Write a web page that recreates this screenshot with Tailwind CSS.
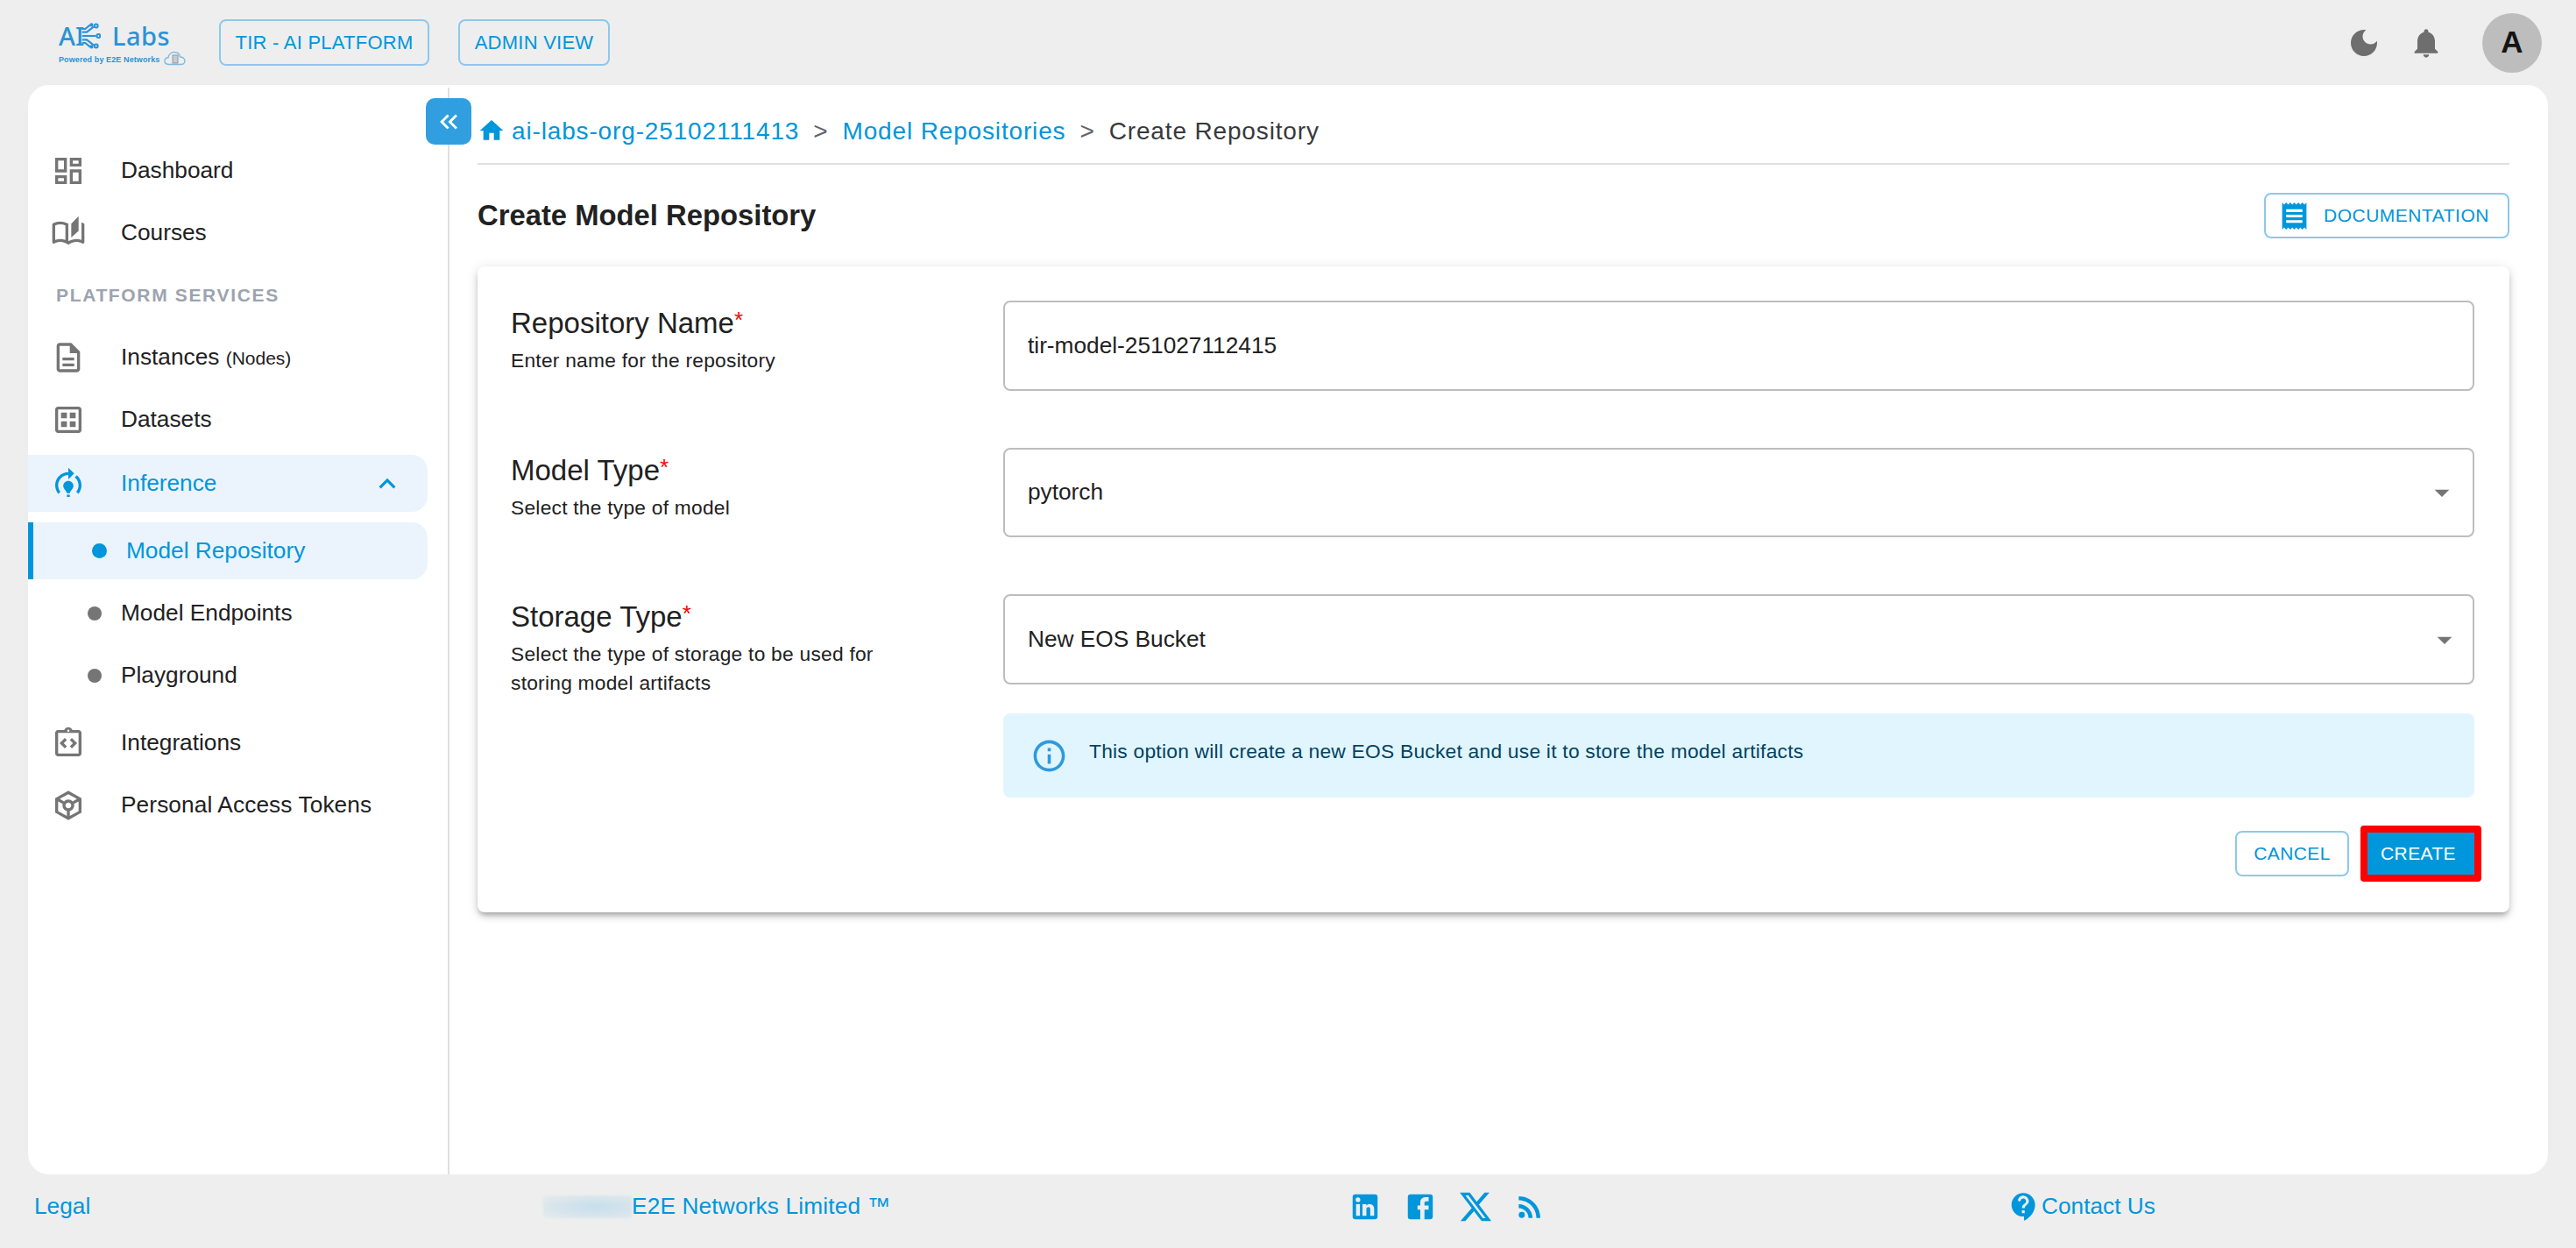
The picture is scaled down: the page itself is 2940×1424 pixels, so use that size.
<!DOCTYPE html>
<html lang="en">
<head>
<meta charset="utf-8">
<title>Create Model Repository</title>
<script src="https://cdn.jsdelivr.net/npm/@tailwindcss/browser@4"></script>
</head>
<body class="m-0">
<div class="w-[2940px] h-[1424px] flex flex-col bg-[#eeeeee] overflow-hidden font-['Liberation_Sans',Arial,sans-serif] text-[26.25px] text-[#212121]">

  <!-- Header -->
  <header class="h-[97px] shrink-0 flex items-center pl-[67px] pr-[39px]">
    <div class="w-[183px] h-[56px] flex flex-col text-[#2a93d5] font-['Noto_Sans',sans-serif]">
      <div class="h-[36px] mt-[2px] flex items-center">
        <span class="text-[29px] leading-[30px] w-[25px] font-medium">AI</span>
        <svg class="w-[23px] h-[30px]" viewBox="0 0 26 32" fill="none" stroke="#2a93d5" stroke-width="2.4">
          <path d="M2 11 L8 11 L17 4"/><path d="M2 7 L6 7 L12 2"/><path d="M2 16 H20"/><path d="M2 21 L8 21 L17 28"/><path d="M2 25 L6 25 L12 30"/>
          <circle cx="20" cy="3" r="2.2"/><circle cx="23" cy="16" r="2.2"/><circle cx="20" cy="29" r="2.2"/><circle cx="14" cy="1.8" r="1.2"/><circle cx="14" cy="30" r="1.2"/>
        </svg>
        <span class="text-[29px] leading-[30px] ml-[13px] tracking-[0.5px] font-medium">Labs</span>
      </div>
      <div class="h-[18px] flex items-center">
        <span class="text-[9px] leading-[12px] font-bold tracking-[0.1px] whitespace-nowrap font-['Liberation_Sans',sans-serif]">Powered by E2E Networks</span>
        <svg class="w-[25px] h-[17px] ml-[5px] -mt-[3px]" viewBox="0 0 25 17" fill="none" stroke="#7fb9e0" stroke-width="1.4">
          <path d="M6 15.5 C2.5 15.5 1 13.5 1 11.5 C1 9 3 7.5 5 7.8 C5.5 4 8.5 1.5 12 1.5 C15.5 1.5 18 4 18.5 7 C21.5 7 24 9 24 11.5 C24 13.8 22 15.5 19.5 15.5 Z"/>
          <rect x="10" y="5" width="6" height="9" fill="#c3cdd4" stroke="#7a8a96" stroke-width="0.8"/>
        </svg>
      </div>
    </div>
    <div class="w-[240px] h-[53px] flex items-center justify-center rounded-[8px] border-2 border-[#8ec8ec] text-[#0096db] text-[22px] tracking-[0.25px] whitespace-nowrap">TIR - AI PLATFORM</div>
    <div class="w-[173px] h-[53px] ml-[33px] flex items-center justify-center rounded-[8px] border-2 border-[#8ec8ec] text-[#0096db] text-[22px] tracking-[0.25px] whitespace-nowrap">ADMIN VIEW</div>
    <div class="ml-auto flex items-center">
      <svg class="w-[40px] h-[40px]" viewBox="0 0 24 24" fill="#6e6e6e"><path d="M12 3c-4.97 0-9 4.03-9 9s4.03 9 9 9 9-4.03 9-9c0-.46-.04-.92-.1-1.36-.98 1.37-2.58 2.26-4.4 2.26-2.98 0-5.4-2.42-5.4-5.4 0-1.81.89-3.42 2.26-4.4-.44-.06-.9-.1-1.36-.1z"/></svg>
      <svg class="w-[40px] h-[40px] ml-[31px]" viewBox="0 0 24 24" fill="#6e6e6e"><path d="M12 22c1.1 0 2-.9 2-2h-4c0 1.1.89 2 2 2zm6-6v-5c0-3.07-1.64-5.64-4.5-6.32V4c0-.83-.67-1.5-1.5-1.5s-1.5.67-1.5 1.5v.68C7.63 5.36 6 7.92 6 11v5l-2 2v1h16v-1l-2-2z"/></svg>
      <div class="w-[68px] h-[68px] ml-[44px] rounded-full bg-[#bdbdbd] flex items-center justify-center text-[#141414] font-bold text-[35px]">A</div>
    </div>
  </header>

  <!-- Main panel -->
  <main class="flex-1 min-h-0 mx-[32px] bg-white rounded-[24px] flex relative">

    <!-- Sidebar -->
    <aside class="w-[481px] shrink-0 mt-[3px] border-r-2 border-[#e0e0e0]">
      <nav class="-mt-[3px] pt-[65px] pr-[23px] flex flex-col">
        <a class="h-[65px] flex items-center pl-[26px]">
          <svg class="w-[40px] h-[40px] mr-[40px]" viewBox="0 0 24 24" fill="#757575"><path d="M19 5v2h-4V5h4M9 5v6H5V5h4m10 8v6h-4v-6h4M9 17v2H5v-2h4M21 3h-8v6h8V3zM11 3H3v10h8V3zm10 8h-8v10h8V11zm-10 4H3v6h8v-6z"/></svg>
          Dashboard
        </a>
        <a class="h-[65px] mt-[6px] flex items-center pl-[26px]">
          <svg class="w-[40px] h-[40px] mr-[40px]" viewBox="0 0 24 24" fill="#757575"><path d="M22.47 5.2C22 4.96 21.51 4.76 21 4.59v12.03C19.86 16.21 18.69 16 17.5 16c-1.9 0-3.78.54-5.5 1.58V5.48C10.38 4.55 8.51 4 6.5 4 4.71 4 3.02 4.44 1.53 5.2c-.33.16-.53.51-.53.88v12.08c0 .58.47.99 1 .99.16 0 .32-.04.48-.12C3.69 18.4 5.05 18 6.5 18c2.07 0 3.98.82 5.5 2 1.52-1.18 3.43-2 5.5-2 1.45 0 2.81.4 4.02 1.04.16.08.32.12.48.12.52 0 1-.41 1-.99V6.08c0-.37-.2-.72-.53-.88zM10 16.62C8.86 16.21 7.69 16 6.5 16c-1.19 0-2.36.21-3.5.62V6.71C4.11 6.24 5.28 6 6.5 6c1.2 0 2.39.25 3.5.72v9.9zM19 .5l-5 5V15l5-4.5V.5z"/></svg>
          Courses
        </a>
        <div class="h-[26px] mt-[26px] pl-[32px] flex items-center text-[21px] font-bold tracking-[1.65px] text-[#9ca3af] whitespace-nowrap">PLATFORM SERVICES</div>
        <a class="h-[65px] mt-[25px] flex items-center pl-[26px]">
          <svg class="w-[40px] h-[40px] mr-[40px]" viewBox="0 0 24 24" fill="#757575"><path d="M8 16h8v2H8zm0-4h8v2H8zm6-10H6c-1.1 0-2 .9-2 2v16c0 1.1.89 2 1.99 2H18c1.1 0 2-.9 2-2V8l-6-6zm4 18H6V4h7v5h5v11z"/></svg>
          <span>Instances <span class="text-[21px]">(Nodes)</span></span>
        </a>
        <a class="h-[65px] mt-[6px] flex items-center pl-[26px]">
          <svg class="w-[40px] h-[40px] mr-[40px]" viewBox="0 0 24 24" fill="#757575"><path d="M19 3H5c-1.1 0-2 .9-2 2v14c0 1.1.9 2 2 2h14c1.1 0 2-.9 2-2V5c0-1.1-.9-2-2-2zm0 16H5V5h14v14zM7 7h4v4H7zm6 0h4v4h-4zm-6 6h4v4H7zm6 0h4v4h-4z"/></svg>
          Datasets
        </a>
        <a class="h-[65px] mt-[8px] flex items-center pl-[26px] bg-[#ebf4fc] rounded-r-[18px] text-[#0096db]">
          <svg class="w-[40px] h-[40px] mr-[40px]" viewBox="0 0 24 24" fill="#0096db"><path d="M15.5 13.5c0 2-2.5 3.5-2.5 5h-2c0-1.5-2.5-3-2.5-5 0-1.93 1.57-3.5 3.5-3.5s3.5 1.57 3.5 3.5zm-2.5 6h-2V21h2v-1.5zm6-6.5c0 1.68-.59 3.21-1.58 4.42l1.42 1.42C20.18 17.27 21 15.23 21 13c0-2.74-1.23-5.19-3.16-6.84l-1.42 1.42C17.99 8.86 19 10.82 19 13zm-3-8-4-4v3c-4.97 0-9 4.03-9 9 0 2.23.82 4.27 2.16 5.84l1.42-1.42C5.59 16.21 5 14.68 5 13c0-3.86 3.14-7 7-7v3l4-4z"/></svg>
          Inference
          <svg class="w-[38px] h-[38px] ml-auto mr-[27px]" viewBox="0 0 24 24" fill="#0096db"><path d="m12 8-6 6 1.41 1.41L12 10.83l4.59 4.58L18 14z"/></svg>
        </a>
        <a class="h-[65px] mt-[12px] flex items-center pl-[67px] border-l-[6px] border-[#0096db] bg-[#ebf4fc] rounded-r-[18px] text-[#0096db]">
          <span class="w-[17px] h-[17px] rounded-full bg-[#0096db] mr-[22px]"></span>
          Model Repository
        </a>
        <a class="h-[65px] mt-[6px] flex items-center pl-[68px]">
          <span class="w-[16px] h-[16px] rounded-full bg-[#757575] mr-[22px]"></span>
          Model Endpoints
        </a>
        <a class="h-[65px] mt-[6px] flex items-center pl-[68px]">
          <span class="w-[16px] h-[16px] rounded-full bg-[#757575] mr-[22px]"></span>
          Playground
        </a>
        <a class="h-[65px] mt-[12px] flex items-center pl-[26px]">
          <svg class="w-[40px] h-[40px] mr-[40px]" viewBox="0 0 24 24" fill="#757575"><path d="M11 14.17 8.83 12 11 9.83 9.59 8.41 6 12l3.59 3.59zm3.41 1.42L18 12l-3.59-3.59L13 9.83 15.17 12 13 14.17z"/><path d="M19 3h-4.18C14.4 1.84 13.3 1 12 1s-2.4.84-2.82 2H5c-.14 0-.27.01-.4.04-.39.08-.74.28-1.01.55-.18.18-.33.4-.43.64-.1.23-.16.49-.16.77v14c0 .27.06.54.16.78s.25.45.43.64c.27.27.62.47 1.01.55.13.02.26.03.4.03h14c1.1 0 2-.9 2-2V5c0-1.1-.9-2-2-2zm-7-.25c.41 0 .75.34.75.75s-.34.75-.75.75-.75-.34-.75-.75.34-.75.75-.75zM19 19H5V5h14v14z"/></svg>
          Integrations
        </a>
        <a class="h-[65px] mt-[6px] flex items-center pl-[26px] tracking-[0.1px]">
          <svg class="w-[40px] h-[40px] mr-[40px]" viewBox="0 0 24 24" fill="#757575"><path d="m21 7-9-5-9 5v10l9 5 9-5V7zm-9-2.71 5.91 3.28-3.01 1.67C14.17 8.48 13.14 8 12 8s-2.17.48-2.9 1.24L6.09 7.57 12 4.29zM11 19.17l-6-3.33V9.26l3.13 1.74c-.09.32-.13.65-.13 1 0 1.86 1.27 3.43 3 3.87v3.3zM10 12c0-1.1.9-2 2-2s2 .9 2 2-.9 2-2 2-2-.9-2-2zm3 7.17v-3.3c1.73-.44 3-2.01 3-3.87 0-.35-.04-.68-.13-1L19 9.26v6.58l-6 3.33z"/></svg>
          Personal Access Tokens
        </a>
      </nav>
    </aside>

    <!-- Collapse toggle over the divider -->
    <button class="absolute left-[455px] top-[15px] w-[52px] h-[53px] -translate-x-[1px] rounded-[10px] bg-[#319fdf] flex items-center justify-center">
      <svg class="w-[34px] h-[34px]" viewBox="0 0 24 24" fill="#ffffff"><path d="M17.59 18 19 16.59 14.42 12 19 7.41 17.59 6l-6 6z"/><path d="M11 18l1.41-1.41L7.83 12l4.58-4.59L11 6l-6 6z"/></svg>
    </button>

    <!-- Content -->
    <section class="flex-1 min-w-0 pl-[32px] pr-[44px] flex flex-col">
      <div class="h-[91px] shrink-0 pt-[16px] flex items-center border-b-2 border-[#e0e0e0] text-[28px] tracking-[0.85px]">
        <svg class="w-[32px] h-[32px] mr-[7px] -mt-[2px]" viewBox="0 0 24 24" fill="#0096db"><path d="M10 20v-6h4v6h5v-8h3L12 3 2 12h3v8z"/></svg>
        <span class="text-[#0096db]">ai-labs-org-25102111413</span>
        <span class="mx-[16px] text-[#5f6368]">&gt;</span>
        <span class="text-[#0096db]">Model Repositories</span>
        <span class="mx-[16px] text-[#5f6368]">&gt;</span>
        <span class="text-[#37393d]">Create Repository</span>
      </div>
      <div class="h-[116px] shrink-0 flex items-center justify-between">
        <h1 class="text-[32.8px] font-bold text-[#212121]">Create Model Repository</h1>
        <div class="w-[280px] h-[52px] pl-[14px] flex items-center rounded-[8px] border-2 border-[#8ec8ec] text-[#0096db] text-[21px] tracking-[0.5px]">
          <svg class="w-[37px] h-[37px] mr-[15px]" viewBox="0 0 24 24" fill="#0096db"><path d="M18 17H6v-2h12v2zm0-4H6v-2h12v2zm0-4H6V7h12v2zM3 22l1.5-1.5L6 22l1.5-1.5L9 22l1.5-1.5L12 22l1.5-1.5L15 22l1.5-1.5L18 22l1.5-1.5L21 22V2l-1.5 1.5L18 2l-1.5 1.5L15 2l-1.5 1.5L12 2l-1.5 1.5L9 2 7.5 3.5 6 2 4.5 3.5 3 2v20z"/></svg>
          DOCUMENTATION
        </div>
      </div>

      <div class="rounded-[8px] bg-white pt-[39px] pb-[35px] pl-[38px] pr-[40px] shadow-[0_5px_5px_-3px_rgba(0,0,0,0.2),0_5px_7px_0_rgba(0,0,0,0.14),0_2px_14px_0_rgba(0,0,0,0.12)]">
        <div class="flex">
          <div class="w-[562px] shrink-0 pt-[2px]">
            <div class="text-[33px] leading-[40px]">Repository Name<span class="text-[#ff0000] text-[26px] align-[6px]">*</span></div>
            <div class="mt-[6px] max-w-[450px] text-[22.75px] leading-[33px] tracking-[0.25px]">Enter name for the repository</div>
          </div>
          <div class="flex-1 h-[103px] pl-[26px] flex items-center rounded-[8px] border-2 border-[#bdbdbd]">tir-model-251027112415</div>
        </div>
        <div class="flex mt-[65px]">
          <div class="w-[562px] shrink-0 pt-[2px]">
            <div class="text-[33px] leading-[40px]">Model Type<span class="text-[#ff0000] text-[26px] align-[6px]">*</span></div>
            <div class="mt-[6px] max-w-[450px] text-[22.75px] leading-[33px] tracking-[0.25px]">Select the type of model</div>
          </div>
          <div class="flex-1 h-[102px] pl-[26px] pr-[15px] flex items-center justify-between rounded-[8px] border-2 border-[#bdbdbd]">
            pytorch
            <svg class="w-[40px] h-[40px]" viewBox="0 0 24 24" fill="#757575"><path d="m7 10 5 5 5-5z"/></svg>
          </div>
        </div>
        <div class="flex mt-[65px]">
          <div class="w-[562px] shrink-0 pt-[2px]">
            <div class="text-[33px] leading-[40px]">Storage Type<span class="text-[#ff0000] text-[26px] align-[6px]">*</span></div>
            <div class="mt-[6px] max-w-[450px] text-[22.75px] leading-[33px] tracking-[0.25px]">Select the type of storage to be used for storing model artifacts</div>
          </div>
          <div class="flex-1 flex flex-col">
            <div class="h-[103px] pl-[26px] pr-[12px] flex items-center justify-between rounded-[8px] border-2 border-[#bdbdbd]">
              New EOS Bucket
              <svg class="w-[40px] h-[40px]" viewBox="0 0 24 24" fill="#757575"><path d="m7 10 5 5 5-5z"/></svg>
            </div>
            <div class="h-[96px] mt-[33px] pl-[31px] flex items-center rounded-[8px] bg-[#e1f5fe] text-[#014361] text-[22.75px] tracking-[0.25px]">
              <svg class="w-[43px] h-[43px] mr-[24px]" viewBox="0 0 24 24" fill="#2d9ade"><path d="M11 7h2v2h-2zm0 4h2v6h-2zm1-9C6.48 2 2 6.48 2 12s4.48 10 10 10 10-4.48 10-10S17.52 2 12 2zm0 18c-4.41 0-8-3.59-8-8s3.59-8 8-8 8 3.59 8 8-3.59 8-8 8z"/></svg>
              <span class="-mt-[10px]">This option will create a new EOS Bucket and use it to store the model artifacts</span>
            </div>
          </div>
        </div>
        <div class="mt-[32px] -mr-[8px] flex items-center justify-end">
          <div class="w-[130px] h-[52px] flex items-center justify-center rounded-[8px] border-2 border-[#8ec8ec] text-[#0096db] text-[21px] tracking-[0.4px]">CANCEL</div>
          <div class="ml-[13px] border-8 border-[#ff0000] rounded-[4px]">
            <div class="w-[122px] h-[48px] pl-[15px] flex items-center bg-[#0096db] text-white text-[21px] tracking-[0.4px]">CREATE</div>
          </div>
        </div>
      </div>
    </section>
  </main>

  <!-- Footer -->
  <footer class="h-[84px] shrink-0 pb-[10px] pl-[39px] flex items-center text-[#0096db]">
    <a class="w-[581px]">Legal</a>
    <div class="w-[923px] flex items-center">
      <span class="w-[101px] h-[26px] bg-[radial-gradient(ellipse_at_60%_50%,#c8dfeb_0%,#d6e4ec_50%,#e8ecee_100%)] blur-[1px]"></span>
      <span class="tracking-[0.15px] whitespace-nowrap">E2E Networks Limited ™</span>
    </div>
    <div class="w-[752px] flex items-center">
      <svg class="w-[38px] h-[38px] -ml-[4px]" viewBox="0 0 24 24" fill="#0096db"><path d="M19 3a2 2 0 0 1 2 2v14a2 2 0 0 1-2 2H5a2 2 0 0 1-2-2V5a2 2 0 0 1 2-2h14m-.5 15.5v-5.3a3.26 3.26 0 0 0-3.26-3.26c-.85 0-1.84.52-2.32 1.3v-1.11h-2.79v8.37h2.79v-4.93c0-.77.62-1.4 1.39-1.4a1.4 1.4 0 0 1 1.4 1.4v4.93h2.79M6.88 8.56a1.68 1.68 0 0 0 1.68-1.68c0-.93-.75-1.69-1.68-1.69a1.69 1.69 0 0 0-1.69 1.69c0 .93.76 1.68 1.69 1.68m1.39 9.94v-8.37H5.5v8.37h2.77z"/></svg>
      <svg class="w-[38px] h-[38px] ml-[25px]" viewBox="0 0 24 24" fill="#0096db"><path d="M5 3h14a2 2 0 0 1 2 2v14a2 2 0 0 1-2 2H5a2 2 0 0 1-2-2V5a2 2 0 0 1 2-2m13 2h-2.5A3.5 3.5 0 0 0 12 8.5V11h-2v3h2v7h3v-7h3v-3h-3V9a1 1 0 0 1 1-1h2V5z"/></svg>
      <svg class="w-[40px] h-[40px] ml-[24px]" viewBox="0 0 24 24" fill="#0096db"><path d="M18.244 2.25h3.308l-7.227 8.26 8.502 11.24H16.17l-5.214-6.817L4.99 21.75H1.68l7.73-8.835L1.254 2.25H8.08l4.713 6.231zm-1.161 17.52h1.833L7.084 4.126H5.117z"/></svg>
      <svg class="w-[38px] h-[38px] ml-[23px]" viewBox="0 0 24 24" fill="#0096db"><circle cx="6.18" cy="17.82" r="2.18"/><path d="M4 4.44v2.83c7.03 0 12.73 5.7 12.73 12.73h2.83c0-8.59-6.97-15.56-15.56-15.56zm0 5.66v2.83c3.9 0 7.07 3.17 7.07 7.07h2.83c0-5.47-4.43-9.9-9.9-9.9z"/></svg>
    </div>
    <div class="flex items-center">
      <svg class="w-[38px] h-[38px] mr-[1px] -ml-[4px]" viewBox="0 0 24 24" fill="#0096db"><path d="M11.5 2C6.81 2 3 5.81 3 10.5S6.81 19 11.5 19h.5v3c4.86-2.34 8-7 8-11.5C20 5.81 16.19 2 11.5 2zm1 14.5h-2v-2h2v2zm.4-4.78c-.01.01-.02.03-.03.05-.05.08-.1.16-.14.24-.02.03-.03.07-.04.11-.03.07-.06.14-.08.21-.07.21-.1.43-.1.68H10.5c0-.51.08-.94.2-1.3 0-.01 0-.02.01-.03.01-.04.04-.06.05-.1.06-.16.13-.3.22-.44.03-.05.07-.1.1-.15.03-.04.05-.09.08-.12l.01.01c.84-1.1 2.21-1.44 2.32-2.68.09-.98-.61-1.93-1.57-2.13-1.04-.22-1.98.39-2.3 1.28-.14.36-.47.65-.88.65h-.2c-.6 0-1.04-.59-.87-1.17.55-1.82 2.37-3.09 4.43-2.79 1.69.25 3.04 1.64 3.33 3.33.44 2.44-1.63 3.03-2.53 4.35z"/></svg>
      <span>Contact Us</span>
    </div>
  </footer>
</div>
</body>
</html>
